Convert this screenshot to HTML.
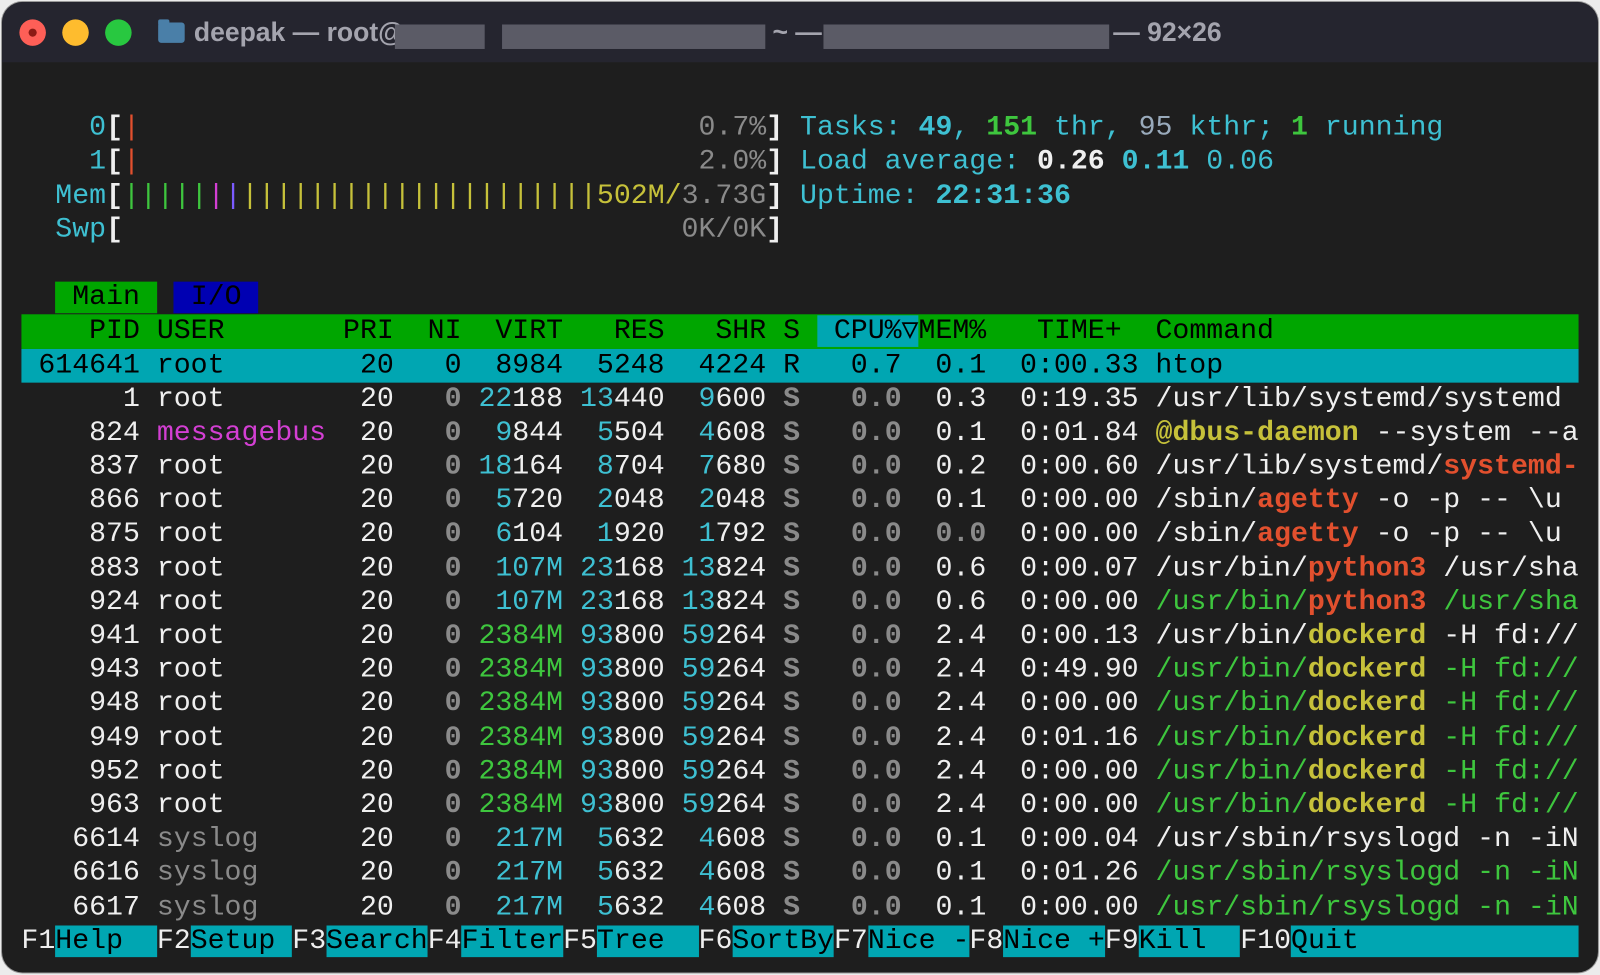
<!DOCTYPE html>
<html><head><meta charset="utf-8"><style>
html,body{margin:0;padding:0;background:#ececec;width:1600px;height:975px;overflow:hidden}
.sc{position:absolute;left:0;top:0;width:1568px;height:955px;transform:scale(1.0204);transform-origin:0 0}
.win{position:absolute;left:2px;top:2px;width:1564px;height:951px;border-radius:20px;background:#1e1e1e;overflow:hidden;box-shadow:0 0 0 1px #9a9a9a}
.title{position:absolute;left:0;top:0;width:100%;height:59px;background:#25252f}
.dot{position:absolute;top:17px;width:26px;height:26px;border-radius:50%}
.tt{position:absolute;top:14px;font:bold 26px "Liberation Sans",sans-serif;color:#a4a4ae;white-space:pre}
.blur{position:absolute;top:22px;height:24px;background:#5b5b66}
.term{position:absolute;left:19px;top:74px;width:1526px;height:870px;font-family:"Liberation Mono","DejaVu Sans Mono",monospace;font-size:27.65px;line-height:33.2px;color:#efefef}
.row{height:33.2px;width:1526px;position:relative;white-space:pre;overflow:hidden}
.c{color:#3ec0d2}.cb{color:#3ec0d2;font-weight:bold}
.g{color:#3ec63e}.gb{color:#3ec63e;font-weight:bold}
.gr{color:#8a8a8a;font-weight:bold}.gn{color:#8a8a8a}
.m{color:#d33fd3}.y{color:#c6c13a;font-weight:bold}.yn{color:#c6c13a}
.r{color:#e2502e;font-weight:bold}.rn{color:#e2502e}
.b{font-weight:bold}.bl{color:#7b5bff}
.hdr{background:#00a600;color:#000}
.sel{background:#00a6b2;color:#000}
.fk{color:#000;background:#00a6b2}
</style></head><body>
<div class="sc">
<div class="win">
 <div class="title">
  <div class="dot" style="left:17px;background:#fe5f57"><div style="position:absolute;left:9px;top:9px;width:8px;height:8px;border-radius:50%;background:#8c1a14"></div></div>
  <div class="dot" style="left:59px;background:#febc2e"></div>
  <div class="dot" style="left:101px;background:#28c840"></div>
  <div style="position:absolute;left:153px;top:20px;width:26px;height:20px;background:#4a7fa8;border-radius:3px"></div>
  <div style="position:absolute;left:153px;top:17px;width:11px;height:5px;background:#4a7fa8;border-radius:2px 2px 0 0"></div>
  <div class="tt" style="left:188px">deepak — root@</div>
  <div class="blur" style="left:385px;width:88px"></div>
  <div class="blur" style="left:490px;width:258px"></div>
  <div class="tt" style="left:755px">~ —</div>
  <div class="blur" style="left:805px;width:280px"></div>
  <div class="tt" style="left:1089px">— 92×26</div>
 </div>
 <div class="term"><div class="row"></div><div class="row">    <span class="c">0</span><span class="b">[</span><span class="rn">|</span>                                 <span class="gn">0.7%</span><span class="b">]</span> <span class="c">Tasks: </span><span class="cb">49</span><span class="c">, </span><span class="gb">151</span><span class="c"> thr, </span><span class="gn" style="color:#9ab">95</span><span class="c"> kthr; </span><span class="gb">1</span><span class="c"> running</span></div><div class="row">    <span class="c">1</span><span class="b">[</span><span class="rn">|</span>                                 <span class="gn">2.0%</span><span class="b">]</span> <span class="c">Load average: </span><span class="b">0.26 </span><span class="cb">0.11 </span><span class="c">0.06</span></div><div class="row">  <span class="c">Mem</span><span class="b">[</span><span class="g">|||||</span><span class="m">|</span><span class="bl">|</span><span class="yn">|||||||||||||||||||||502M/</span><span class="gn">3.73G</span><span class="b">]</span> <span class="c">Uptime: </span><span class="cb">22:31:36</span></div><div class="row">  <span class="c">Swp</span><span class="b">[</span>                                 <span class="gn">0K/0K</span><span class="b">]</span></div><div class="row"></div><div class="row">  <span class="hdr"> Main </span> <span style="background:#0000b2;color:#000"> I/O </span></div><div class="row hdr">    PID USER       PRI  NI  VIRT   RES   SHR S <span class="sel"> CPU%▽</span>MEM%   TIME+  Command</div><div class="row sel"> 614641 root        20   0  8984  5248  4224 R   0.7  0.1  0:00.33 htop</div><div class="row">      1 root        20   <span class="gr">0</span> <span class="c">22</span>188 <span class="c">13</span>440  <span class="c">9</span>600 <span class="gr">S</span>   <span class="gr">0.0</span>  0.3  0:19.35 /usr/lib/systemd/systemd</div><div class="row">    824 <span class="m">messagebus</span>  20   <span class="gr">0</span>  <span class="c">9</span>844  <span class="c">5</span>504  <span class="c">4</span>608 <span class="gr">S</span>   <span class="gr">0.0</span>  0.1  0:01.84 <span class="y">@dbus-daemon</span> --system --a</div><div class="row">    837 root        20   <span class="gr">0</span> <span class="c">18</span>164  <span class="c">8</span>704  <span class="c">7</span>680 <span class="gr">S</span>   <span class="gr">0.0</span>  0.2  0:00.60 /usr/lib/systemd/<span class="r">systemd-</span></div><div class="row">    866 root        20   <span class="gr">0</span>  <span class="c">5</span>720  <span class="c">2</span>048  <span class="c">2</span>048 <span class="gr">S</span>   <span class="gr">0.0</span>  0.1  0:00.00 /sbin/<span class="r">agetty</span> -o -p -- \u</div><div class="row">    875 root        20   <span class="gr">0</span>  <span class="c">6</span>104  <span class="c">1</span>920  <span class="c">1</span>792 <span class="gr">S</span>   <span class="gr">0.0</span>  <span class="gr">0.0</span>  0:00.00 /sbin/<span class="r">agetty</span> -o -p -- \u</div><div class="row">    883 root        20   <span class="gr">0</span>  <span class="c">107M</span> <span class="c">23</span>168 <span class="c">13</span>824 <span class="gr">S</span>   <span class="gr">0.0</span>  0.6  0:00.07 /usr/bin/<span class="r">python3</span> /usr/sha</div><div class="row">    924 root        20   <span class="gr">0</span>  <span class="c">107M</span> <span class="c">23</span>168 <span class="c">13</span>824 <span class="gr">S</span>   <span class="gr">0.0</span>  0.6  0:00.00 <span class="g">/usr/bin/</span><span class="r">python3</span><span class="g"> /usr/sha</span></div><div class="row">    941 root        20   <span class="gr">0</span> <span class="g">2384M</span> <span class="c">93</span>800 <span class="c">59</span>264 <span class="gr">S</span>   <span class="gr">0.0</span>  2.4  0:00.13 /usr/bin/<span class="y">dockerd</span> -H fd://</div><div class="row">    943 root        20   <span class="gr">0</span> <span class="g">2384M</span> <span class="c">93</span>800 <span class="c">59</span>264 <span class="gr">S</span>   <span class="gr">0.0</span>  2.4  0:49.90 <span class="g">/usr/bin/</span><span class="y">dockerd</span><span class="g"> -H fd://</span></div><div class="row">    948 root        20   <span class="gr">0</span> <span class="g">2384M</span> <span class="c">93</span>800 <span class="c">59</span>264 <span class="gr">S</span>   <span class="gr">0.0</span>  2.4  0:00.00 <span class="g">/usr/bin/</span><span class="y">dockerd</span><span class="g"> -H fd://</span></div><div class="row">    949 root        20   <span class="gr">0</span> <span class="g">2384M</span> <span class="c">93</span>800 <span class="c">59</span>264 <span class="gr">S</span>   <span class="gr">0.0</span>  2.4  0:01.16 <span class="g">/usr/bin/</span><span class="y">dockerd</span><span class="g"> -H fd://</span></div><div class="row">    952 root        20   <span class="gr">0</span> <span class="g">2384M</span> <span class="c">93</span>800 <span class="c">59</span>264 <span class="gr">S</span>   <span class="gr">0.0</span>  2.4  0:00.00 <span class="g">/usr/bin/</span><span class="y">dockerd</span><span class="g"> -H fd://</span></div><div class="row">    963 root        20   <span class="gr">0</span> <span class="g">2384M</span> <span class="c">93</span>800 <span class="c">59</span>264 <span class="gr">S</span>   <span class="gr">0.0</span>  2.4  0:00.00 <span class="g">/usr/bin/</span><span class="y">dockerd</span><span class="g"> -H fd://</span></div><div class="row">   6614 <span class="gn">syslog</span>      20   <span class="gr">0</span>  <span class="c">217M</span>  <span class="c">5</span>632  <span class="c">4</span>608 <span class="gr">S</span>   <span class="gr">0.0</span>  0.1  0:00.04 /usr/sbin/rsyslogd -n -iN</div><div class="row">   6616 <span class="gn">syslog</span>      20   <span class="gr">0</span>  <span class="c">217M</span>  <span class="c">5</span>632  <span class="c">4</span>608 <span class="gr">S</span>   <span class="gr">0.0</span>  0.1  0:01.26 <span class="g">/usr/sbin/rsyslogd -n -iN</span></div><div class="row">   6617 <span class="gn">syslog</span>      20   <span class="gr">0</span>  <span class="c">217M</span>  <span class="c">5</span>632  <span class="c">4</span>608 <span class="gr">S</span>   <span class="gr">0.0</span>  0.1  0:00.00 <span class="g">/usr/sbin/rsyslogd -n -iN</span></div><div class="row">F1<span class="fk">Help  </span>F2<span class="fk">Setup </span>F3<span class="fk">Search</span>F4<span class="fk">Filter</span>F5<span class="fk">Tree  </span>F6<span class="fk">SortBy</span>F7<span class="fk">Nice -</span>F8<span class="fk">Nice +</span>F9<span class="fk">Kill  </span>F10<span class="fk">Quit                 </span></div></div>
</div>
</div>
</body></html>
